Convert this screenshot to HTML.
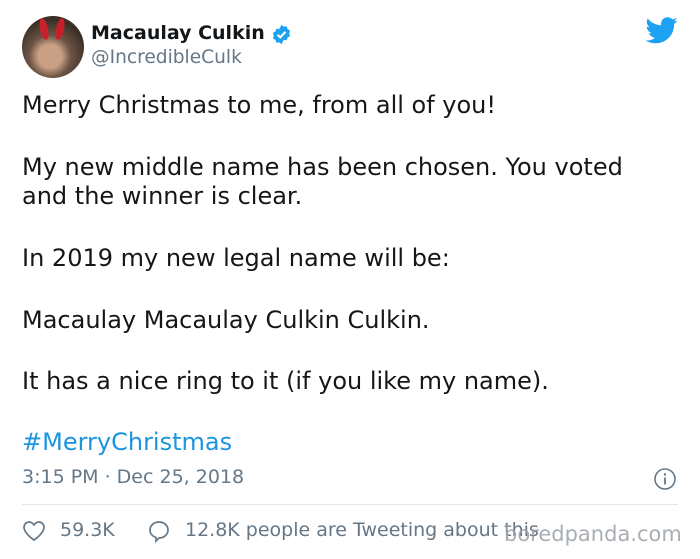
<!DOCTYPE html>
<html><head><style>
body{margin:0;width:700px;height:559px;background:#fff;font-family:"DejaVu Sans",sans-serif;color:#14171a;position:relative;overflow:hidden}
.a{position:absolute;white-space:nowrap}
.t{font-size:24px;left:22px;line-height:29px}
.g{color:#657786}
</style></head><body>
<div class="a" style="left:22px;top:16px;width:62px;height:62px;border-radius:50%;background:radial-gradient(circle at 45% 65%,#c9a084 0 22%,#6b5444 40%,#3a2e25 70%);overflow:hidden">
<div style="position:absolute;left:18px;top:2px;width:8px;height:22px;background:#c8202a;border-radius:50%;transform:rotate(-12deg)"></div>
<div style="position:absolute;left:34px;top:2px;width:8px;height:22px;background:#c8202a;border-radius:50%;transform:rotate(12deg)"></div>
</div>
<div class="a" style="left:91px;top:22px;font-size:19px;font-weight:bold">Macaulay Culkin</div>
<svg class="a" style="left:271px;top:24px" width="21" height="21" viewBox="0 0 24 24"><path fill="#1da1f2" d="M12 1l2.6 2 3.3-.3 1 3.1 2.9 1.6-1 3.2 1 3.2-2.9 1.6-1 3.1-3.3-.3L12 23l-2.6-2-3.3.3-1-3.1-2.9-1.6 1-3.2-1-3.2 2.9-1.6 1-3.1 3.3.3z"/><path d="M7.5 12.3l3 3 6-6.3" stroke="#fff" stroke-width="2.4" fill="none"/></svg>
<div class="a g" style="left:91px;top:47px;font-size:18.6px">@IncredibleCulk</div>
<svg class="a" style="left:646px;top:17px" width="32" height="27" viewBox="0 0 24 20"><path fill="#1da1f2" d="M23.6 2.4c-.9.4-1.8.6-2.8.8 1-.6 1.8-1.6 2.1-2.7-.9.6-2 1-3.1 1.2C18.9.7 17.6.1 16.2.1c-2.7 0-4.9 2.2-4.9 4.9 0 .4 0 .8.1 1.1C7.3 5.9 3.7 4 1.3 1 .9 1.7.6 2.6.6 3.5c0 1.7.9 3.2 2.2 4.1-.8 0-1.6-.2-2.2-.6v.1c0 2.4 1.7 4.4 3.9 4.8-.4.1-.8.2-1.3.2-.3 0-.6 0-.9-.1.6 2 2.4 3.4 4.6 3.4-1.7 1.3-3.8 2.1-6.1 2.1-.4 0-.8 0-1.2-.1 2.2 1.4 4.8 2.2 7.5 2.2 9.1 0 14-7.5 14-14v-.6c1-.7 1.8-1.6 2.5-2.6z"/></svg>
<div class="a t" style="top:91px">Merry Christmas to me, from all of you!</div>
<div class="a t" style="top:153px">My new middle name has been chosen. You voted<br>and the winner is clear.</div>
<div class="a t" style="top:244px">In 2019 my new legal name will be:</div>
<div class="a t" style="top:306px">Macaulay Macaulay Culkin Culkin.</div>
<div class="a t" style="top:367px">It has a nice ring to it (if you like my name).</div>
<div class="a t" style="top:428px;color:#1b95e0">#MerryChristmas</div>
<div class="a g" style="left:22px;top:466px;font-size:19px">3:15 PM · Dec 25, 2018</div>
<svg class="a" style="left:653px;top:467px" width="24" height="24" viewBox="0 0 24 24"><circle cx="12" cy="12" r="10" fill="none" stroke="#657786" stroke-width="1.6"/><circle cx="12" cy="7.5" r="1.2" fill="#657786"/><path d="M12 10.5v7" stroke="#657786" stroke-width="1.8"/></svg>
<div class="a" style="left:22px;top:504px;width:656px;height:1px;background:#e1e8ed"></div>
<svg class="a" style="left:22px;top:520px" width="24" height="22" viewBox="0 0 24 22"><path d="M12 20S2 13.5 2 7.3C2 4.3 4.3 2 7 2c2.2 0 3.8 1.3 5 3 1.2-1.7 2.8-3 5-3 2.7 0 5 2.3 5 5.3C22 13.5 12 20 12 20z" fill="none" stroke="#657786" stroke-width="1.7"/></svg>
<div class="a g" style="left:60px;top:519px;font-size:19px">59.3K</div>
<svg class="a" style="left:147px;top:519px" width="24" height="24" viewBox="0 0 24 24"><path d="M12 3c5 0 9 3.5 9 8s-4 8-9 8l-3 3v-3.5C5.3 17.3 3 14.5 3 11c0-4.5 4-8 9-8z" fill="none" stroke="#657786" stroke-width="1.7"/></svg>
<div class="a g" style="left:185px;top:519px;font-size:19px">12.8K people are Tweeting about this</div>
<div class="a" style="left:504px;top:522px;font-size:21px;color:#9aa0a6;opacity:.85">boredpanda.com</div>
</body></html>
